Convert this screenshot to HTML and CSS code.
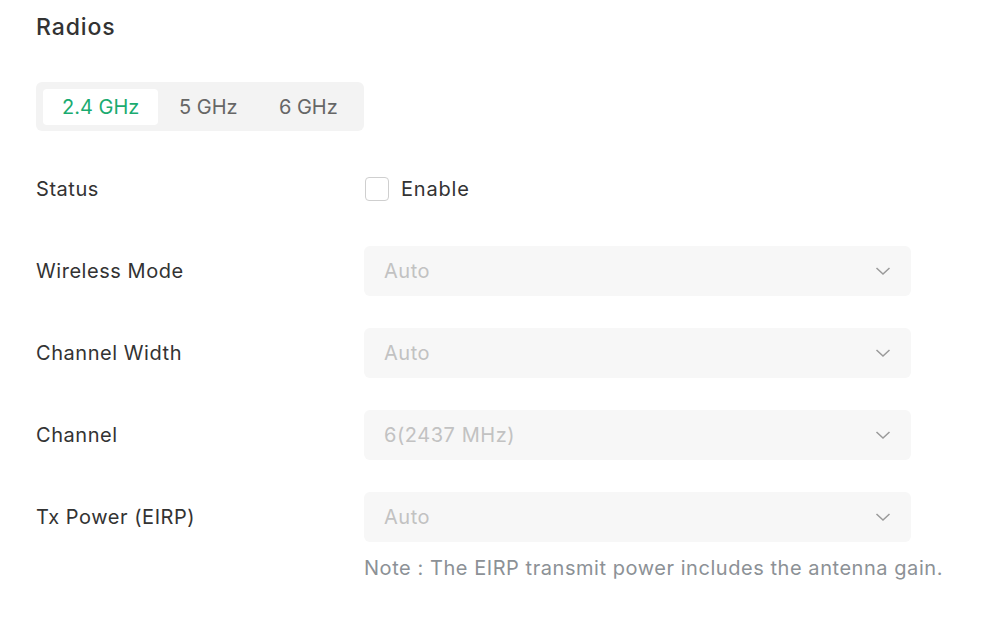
FILE: index.html
```html
<!DOCTYPE html>
<html lang="en">
<head>
    <meta charset="UTF-8">
    <meta name="viewport" content="width=device-width, initial-scale=1.0">
    <title>Radios</title>
    <link rel="stylesheet" href="styles.css">
</head>
<body>
    <div class="page">
        <h1 class="title">Radios</h1>

        <div class="tabs">
            <div class="tab active">2.4 GHz</div>
            <div class="tab">5 GHz</div>
            <div class="tab">6 GHz</div>
        </div>

        <div class="form">
            <div class="row">
                <div class="label">Status</div>
                <label class="check">
                    <span class="box"></span>
                    <span>Enable</span>
                </label>
            </div>

            <div class="row">
                <div class="label">Wireless Mode</div>
                <div class="select">
                    <span>Auto</span>
                    <svg class="chevron" width="16" height="10" viewBox="0 0 16 10"><path d="M1.5 2 L8 8 L14.5 2" fill="none" stroke="#9a9a9a" stroke-width="1.5"/></svg>
                </div>
            </div>

            <div class="row">
                <div class="label">Channel Width</div>
                <div class="select">
                    <span>Auto</span>
                    <svg class="chevron" width="16" height="10" viewBox="0 0 16 10"><path d="M1.5 2 L8 8 L14.5 2" fill="none" stroke="#9a9a9a" stroke-width="1.5"/></svg>
                </div>
            </div>

            <div class="row">
                <div class="label">Channel</div>
                <div class="select">
                    <span>6(2437 MHz)</span>
                    <svg class="chevron" width="16" height="10" viewBox="0 0 16 10"><path d="M1.5 2 L8 8 L14.5 2" fill="none" stroke="#9a9a9a" stroke-width="1.5"/></svg>
                </div>
            </div>

            <div class="row last">
                <div class="label">Tx Power (EIRP)</div>
                <div class="field">
                    <div class="select">
                        <span>Auto</span>
                        <svg class="chevron" width="16" height="10" viewBox="0 0 16 10"><path d="M1.5 2 L8 8 L14.5 2" fill="none" stroke="#9a9a9a" stroke-width="1.5"/></svg>
                    </div>
                </div>
            </div>
            <div class="note">Note : The EIRP transmit power includes the antenna gain.</div>
        </div>
    </div>
</body>
</html>
```

FILE: styles.css
```css
* {
    margin: 0;
    padding: 0;
    box-sizing: border-box;
}

body {
    font-family: 'Inter', 'Noto Sans', sans-serif;
    background: #fff;
    color: #333;
    letter-spacing: 0.55px;
}

.page {
    padding: 11px 36px 0 36px;
}

.title {
    font-size: 23px;
    font-weight: 500;
    line-height: 32px;
    color: #333;
    letter-spacing: 0.9px;
    margin-bottom: 39px;
}

.tabs {
    display: inline-flex;
    background: #f3f3f3;
    border-radius: 6px;
    padding: 7px 6px 6px 7px;
    margin-bottom: 33px;
    letter-spacing: 0;
}

.tab {
    min-width: 100px;
    height: 36px;
    line-height: 36px;
    padding: 0 19px;
    text-align: center;
    font-size: 20px;
    color: #666;
    border-radius: 4px;
}

.tab.active {
    background: #fff;
    color: #1aab70;
}

.row {
    display: flex;
    align-items: center;
    min-height: 50px;
    margin-bottom: 32px;
}

.row.last {
    margin-bottom: 0;
}

.label {
    width: 328px;
    font-size: 20px;
    color: #333;
}

.check {
    display: flex;
    align-items: center;
    gap: 12px;
    font-size: 20px;
    color: #333;
    letter-spacing: 0.8px;
}

.box {
    width: 24px;
    height: 24px;
    border: 1px solid #cfcfcf;
    border-radius: 4px;
    margin-left: 1px;
}

.field {
    width: 547px;
}

.select {
    width: 547px;
    height: 50px;
    background: #f7f7f7;
    border-radius: 6px;
    display: flex;
    align-items: center;
    justify-content: space-between;
    padding: 0 20px;
    font-size: 20px;
    color: #c2c2c2;
}

.note {
    margin-left: 328px;
    margin-top: 12px;
    font-size: 20px;
    line-height: 28px;
    color: #8c9196;
}
```
